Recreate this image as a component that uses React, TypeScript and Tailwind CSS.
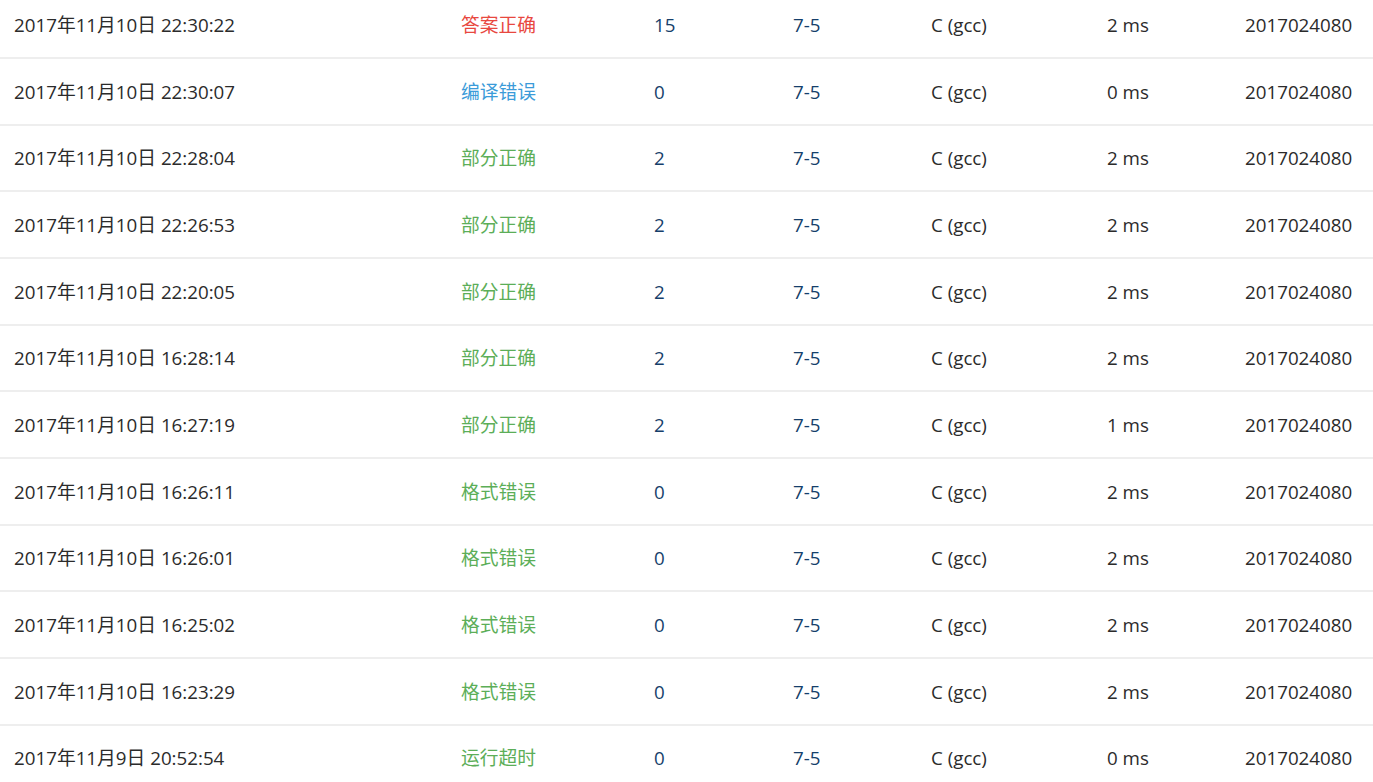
const rows = [
  { time: "2017年11月10日 22:30:22", status: "答案正确", tone: "ok", score: "15", ms: "2 ms" },
  { time: "2017年11月10日 22:30:07", status: "编译错误", tone: "ce", score: "0", ms: "0 ms" },
  { time: "2017年11月10日 22:28:04", status: "部分正确", tone: "pa", score: "2", ms: "2 ms" },
  { time: "2017年11月10日 22:26:53", status: "部分正确", tone: "pa", score: "2", ms: "2 ms" },
  { time: "2017年11月10日 22:20:05", status: "部分正确", tone: "pa", score: "2", ms: "2 ms" },
  { time: "2017年11月10日 16:28:14", status: "部分正确", tone: "pa", score: "2", ms: "2 ms" },
  { time: "2017年11月10日 16:27:19", status: "部分正确", tone: "pa", score: "2", ms: "1 ms" },
  { time: "2017年11月10日 16:26:11", status: "格式错误", tone: "pa", score: "0", ms: "2 ms" },
  { time: "2017年11月10日 16:26:01", status: "格式错误", tone: "pa", score: "0", ms: "2 ms" },
  { time: "2017年11月10日 16:25:02", status: "格式错误", tone: "pa", score: "0", ms: "2 ms" },
  { time: "2017年11月10日 16:23:29", status: "格式错误", tone: "pa", score: "0", ms: "2 ms" },
  { time: "2017年11月9日 20:52:54", status: "运行超时", tone: "pa", score: "0", ms: "0 ms" },
]

const toneClass: Record<string, string> = {
  ok: "text-[#e8483f]",
  ce: "text-[#3b9bd9]",
  pa: "text-[#5cae58]",
}

export default function App() {
  return (
    <div className="h-[782px] overflow-hidden bg-white font-['Open_Sans','Noto_Sans_CJK_SC',sans-serif] text-[18.75px] text-[#2b2b2b]">
      <div className="mt-[-7.67px]">
        {rows.map((row, i) => (
          <div
            key={i}
            className="grid h-[66.67px] grid-cols-[447px_193px_139px_138px_176px_138px_1fr] items-center border-b-2 border-[#eeeeee] pl-[14px] pt-[1px]"
          >
            <span>{row.time}</span>
            <span className={toneClass[row.tone]}>{row.status}</span>
            <span className="text-[#163f6b]">{row.score}</span>
            <span className="text-[#163f6b]">7-5</span>
            <span>C (gcc)</span>
            <span>{row.ms}</span>
            <span>2017024080</span>
          </div>
        ))}
      </div>
    </div>
  )
}
